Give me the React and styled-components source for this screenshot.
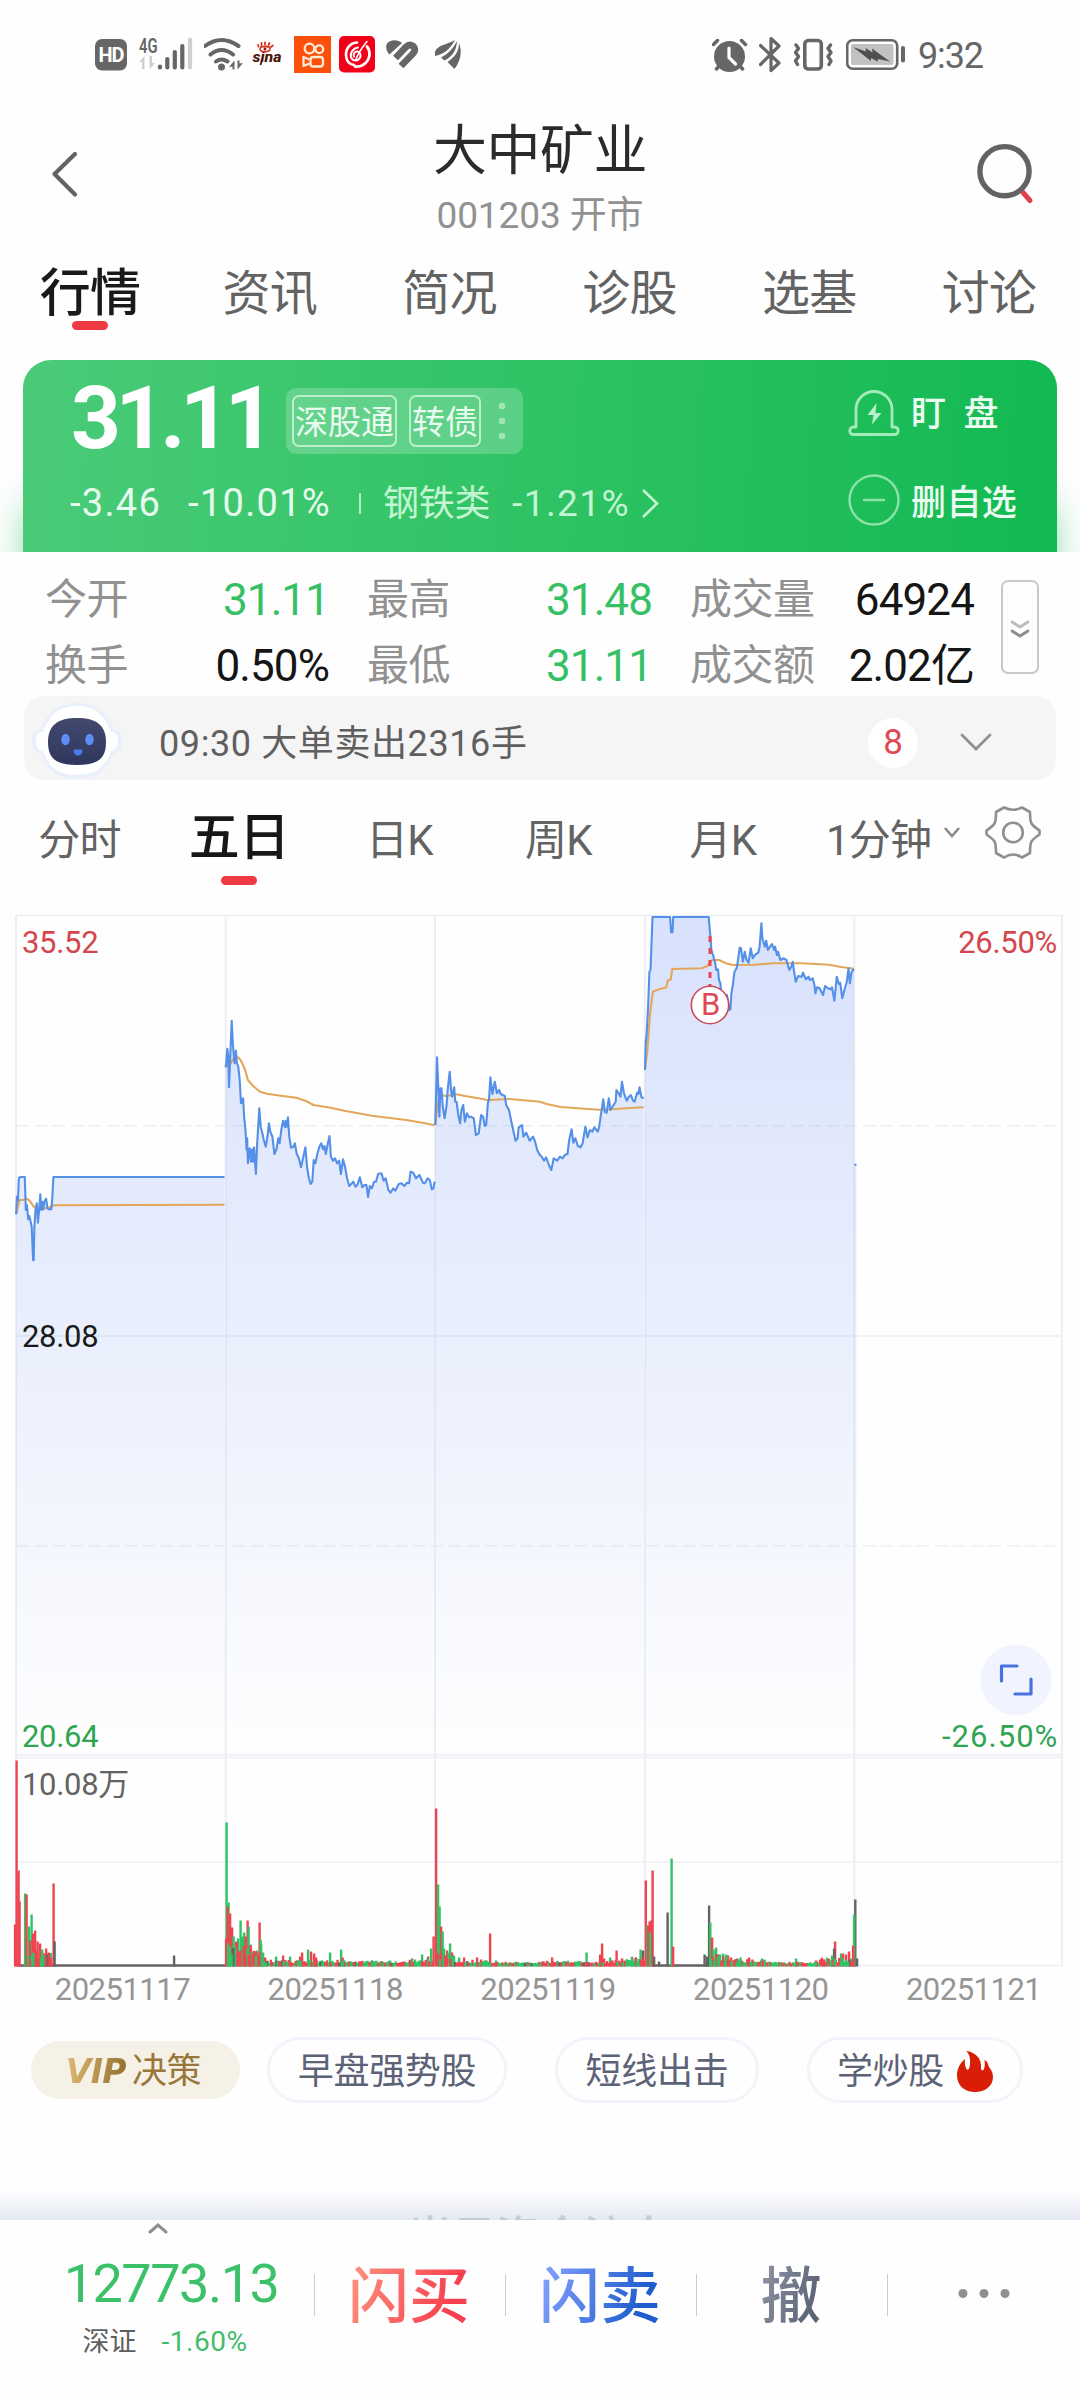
import styled, { createGlobalStyle, css } from 'styled-components';

const GlobalStyle = createGlobalStyle`
  * {
    box-sizing: border-box;
  }

  body {
    margin: 0;
    background: #fefefe;
    font-family: Roboto, 'Noto Sans CJK SC', sans-serif;
    -webkit-font-smoothing: antialiased;
  }
`;

const Screen = styled.div`
  width: 1080px;
  height: 2400px;
  display: flex;
  flex-direction: column;
  overflow: hidden;
  background: #fefefe;
`;

/* ---------- status bar ---------- */

const StatusBar = styled.div`
  height: 110px;
  flex: none;
  padding: 35px 97px 35px 95px;
  display: flex;
  justify-content: space-between;
`;

const StatusGroup = styled.div`
  display: flex;
  align-items: center;
`;

const StatusIcon = styled.svg`
  display: block;
  flex: none;
  width: ${({ $w }) => $w}px;
  height: 40px;
  margin-left: ${({ $gap }) => $gap || 0}px;
`;

const Clock = styled.span`
  margin-left: 12px;
  padding-top: 1px;
  font-size: 36px;
  line-height: 40px;
  letter-spacing: -1.1px;
  color: #666;
`;

/* ---------- header ---------- */

const Header = styled.header`
  height: 134px;
  flex: none;
  display: flex;
  justify-content: space-between;
`;

const HeaderButton = styled.button`
  width: 130px;
  height: 128px;
  padding: 0;
  border: 0;
  background: none;
`;

const TitleBlock = styled.div`
  display: flex;
  flex-direction: column;
  align-items: center;
`;

const StockName = styled.h1`
  margin: 11px 0 0;
  font-size: 54px;
  line-height: 62px;
  font-weight: 400;
  letter-spacing: -0.5px;
  color: #2b2b2b;
`;

const StockCode = styled.div`
  margin-top: 13px;
  font-size: 37px;
  line-height: 40px;
  letter-spacing: -0.1px;
  color: #919191;
`;

const MainTabs = styled.nav`
  height: 116px;
  flex: none;
  padding-right: 1px;
  display: grid;
  grid-template-columns: repeat(6, 1fr);
`;

const MainTab = styled.div`
  display: flex;
  flex-direction: column;
  align-items: center;
  padding-top: 21px;
  font-size: 48px;
  line-height: 58px;
  letter-spacing: -0.8px;
  color: #636363;

  ${({ $active }) => $active && css`
    font-size: 51px;
    font-weight: 500;
    color: #1a1a1a;
  `}
`;

const ActiveMark = styled.i`
  width: 36px;
  height: 9px;
  border-radius: 5px;
  background: #f03a43;
  margin-top: ${({ $top }) => $top}px;
`;

/* ---------- price card ---------- */

const CardStage = styled.section`
  height: 192px;
  flex: none;
  padding: 0 23px;
  overflow: hidden;
`;

const PriceCard = styled.div`
  height: 192px;
  padding: 0 0 0 48px;
  border-radius: 28px 28px 0 0;
  background: linear-gradient(93deg, #4acb78 0%, #2fc364 50%, #12b951 100%);
  box-shadow: 0 135px 36px -4px rgba(40, 190, 95, 0.6);
  display: flex;
  justify-content: space-between;
`;

const PriceMain = styled.div`
  padding-top: 24px;
`;

const PriceRow = styled.div`
  display: flex;
  align-items: center;
  height: 72px;
`;

const Price = styled.strong`
  width: 215px;
  margin-top: -5px;
  font-size: 87px;
  line-height: 72px;
  font-weight: 700;
  letter-spacing: -5.3px;
  color: #fff;
`;

const TagBox = styled.div`
  width: 237px;
  height: 66px;
  margin-top: 2px;
  padding-left: 6px;
  border-radius: 10px;
  background: rgba(255, 255, 255, 0.21);
  display: flex;
  align-items: center;
  gap: 12px;
`;

const Tag = styled.span`
  height: 52px;
  padding: 1px 1px 0;
  border: 2px solid #b9efca;
  border-radius: 7px;
  font-size: 33px;
  line-height: 50px;
  color: #e9fbef;
`;

const ChangeRow = styled.div`
  display: flex;
  align-items: center;
  height: 40px;
  margin: 27px 0 0 -1px;
  font-size: 38px;
  line-height: 40px;
  letter-spacing: 1.3px;
  color: #e6fbed;
`;

const Percent = styled.span`
  margin-left: 27px;
`;

const Sector = styled.span`
  margin: 2px 0 0 22px;
  font-size: 36px;
  letter-spacing: -0.3px;
  color: #c3f5d3;
`;

const SectorChange = styled(Sector)`
  margin-left: 22px;
  font-size: 37px;
  letter-spacing: 1.4px;
`;

const Pipe = styled.i`
  width: 2px;
  height: 21px;
  margin-left: 28px;
  background: #aeecc2;
`;

const CardActions = styled.div`
  width: 209px;
  padding-top: 25px;
`;

const CardAction = styled.div`
  display: flex;
  align-items: center;
  height: 56px;
  margin-bottom: 31px;
  gap: 11px;
  font-size: 35px;
  font-weight: 500;
  line-height: 56px;
  color: #eafcf0;
  white-space: pre;

  span {
    padding-top: 3px;
  }

  & + & span {
    padding-top: 8px;
    letter-spacing: 0.4px;
  }
`;

/* ---------- quotes ---------- */

const Quotes = styled.section`
  flex: none;
  height: 144px;
  padding: 28px 0 0 45px;
  display: grid;
  grid-template-columns: 284px 285px 284px 38px;
  grid-template-rows: 40px 40px;
  column-gap: 38px;
  row-gap: 26px;
  background: #fefefe;
`;

const Quote = styled.div`
  display: flex;
  justify-content: space-between;
  align-items: center;
  font-size: 42px;
  line-height: 40px;
  letter-spacing: -0.5px;
  color: #919191;
  grid-column: ${({ $col }) => $col};
  grid-row: ${({ $row }) => $row};
`;

const QuoteValue = styled.span`
  font-size: 44px;
  letter-spacing: -0.9px;
  color: ${({ $down }) => ($down ? '#36c065' : '#151515')};
`;

const ExpandButton = styled.button`
  grid-column: 4;
  grid-row: 1 / span 2;
  width: 38px;
  height: 94px;
  margin: 0 0 0 -11px;
  padding: 0;
  border: 2.5px solid #c9c9c9;
  border-radius: 7px;
  background: none;
`;

/* ---------- alert strip ---------- */

const AlertStrip = styled.div`
  flex: none;
  height: 84px;
  margin: 0 24px;
  padding-left: 6px;
  border-radius: 20px;
  background: #f5f5f5;
  display: flex;
  align-items: center;

  > svg:first-child {
    margin-top: 5px;
  }
`;

const AlertText = styled.span`
  flex: none;
  margin-left: 35px;
  width: 673px;
  padding-top: 11px;
  font-size: 36px;
  line-height: 40px;
  letter-spacing: 0.6px;
  color: #5f5f5f;
`;

const AlertCount = styled.span`
  width: 50px;
  height: 50px;
  margin: 10px 42px 0 36px;
  border-radius: 50%;
  background: #fff;
  text-align: center;
  font-size: 35px;
  line-height: 50px;
  color: #dd4a56;
`;

/* ---------- period tabs ---------- */

const PeriodTabs = styled.nav`
  flex: none;
  height: 130px;
  display: grid;
  grid-template-columns: 159px 160px 161px 157px 172px 156px 96px;
`;

const PeriodTab = styled.div`
  display: flex;
  flex-direction: column;
  align-items: center;
  padding-top: 31px;
  font-size: 42px;
  line-height: 60px;
  letter-spacing: -0.8px;
  color: #636363;

  ${({ $active }) => $active && css`
    padding-top: 28px;
    font-size: 51px;
    font-weight: 500;
    color: #171717;
  `}
`;

const MinuteTab = styled(PeriodTab)`
  flex-direction: row;
  align-items: flex-start;
  padding-left: 17px;
  gap: 13px;
`;

/* ---------- chart ---------- */

const ChartSvg = styled.svg`
  display: block;
  flex: none;
  width: 1080px;
  height: 1060px;
  font-size: 31px;

  text {
    letter-spacing: -0.3px;
  }
`;

const Dates = styled.div`
  flex: none;
  height: 60px;
  padding: 1px 0 0 16px;
  display: grid;
  grid-template-columns: repeat(5, 1fr);
  text-align: center;
  font-size: 31px;
  line-height: 38px;
  letter-spacing: -0.5px;
  color: #959595;
`;

/* ---------- strategy pills ---------- */

const Pills = styled.div`
  flex: none;
  height: 160px;
  padding: 7px 57px 0 31px;
  display: flex;
  align-items: flex-start;
`;

const Pill = styled.div`
  width: ${({ $w }) => $w}px;
  height: 66px;
  margin-left: ${({ $gap }) => $gap}px;
  padding-top: 3px;
  border: 3px solid #f1f4fa;
  border-radius: 33px;
  display: flex;
  justify-content: center;
  align-items: center;
  gap: 13px;
  font-size: 36px;
  letter-spacing: -0.3px;
  line-height: 40px;
  color: #5c6377;
`;

const VipPill = styled(Pill)`
  height: 58px;
  margin: 4px 0 0;
  padding-right: 4px;
  border: 0;
  background: #f6f1e6;
  color: #98783a;
  font-size: 35px;
  gap: 2px;
`;

const Vip = styled.b`
  font-family: 'DejaVu Sans', sans-serif;
  font-size: 33px;
  font-style: italic;
  font-weight: 700;
  letter-spacing: -0.6px;
  padding-right: 4px;
  background: linear-gradient(100deg, #e2bd7a, #8a6822);
  background-clip: text;
  color: transparent;
`;

/* ---------- bottom ---------- */

const NextSection = styled.div`
  flex: none;
  height: 30px;
  overflow: hidden;
  padding-top: 26px;
  background: linear-gradient(to bottom, rgba(229, 233, 242, 0), #e4e8f2);
  text-align: center;
  font-size: 44px;
  font-weight: 500;
  line-height: 44px;
  color: rgba(120, 130, 150, 0.3);
`;

const TradeBar = styled.footer`
  flex: none;
  height: 180px;
  display: grid;
  grid-template-columns: 314px 191px 191px 191px 1fr;
  background: #fefefe;
`;

const IndexBlock = styled.div`
  padding-top: 3px;
  padding-left: 28px;
  display: flex;
  flex-direction: column;
  align-items: center;

  > svg {
    margin-right: 27px;
  }
`;

const IndexValue = styled.div`
  margin-top: 22px;
  font-size: 54px;
  line-height: 56px;
  letter-spacing: -1.5px;
  color: #3cc169;
`;

const IndexMeta = styled.div`
  display: flex;
  gap: 25px;
  margin: 15px 12px 0 0;
  font-size: 27px;
  line-height: 30px;
  color: #5f5f5f;

  span {
    font-size: 28px;
    color: #43bd6c;
    letter-spacing: 0.5px;
  }
`;

const TradeCell = styled.div`
  height: 42px;
  margin-top: 54px;
  border-left: 1.5px solid #ccc;
  display: flex;
  justify-content: center;
  align-items: center;
`;

const TradeLabel = styled.span`
  margin: 4px 2px 0 0;
  font-size: 61px;
  line-height: 80px;
  font-weight: 500;
  background: linear-gradient(110deg, ${({ $from }) => $from} 10%, ${({ $to }) => $to} 80%);
  background-clip: text;
  color: transparent;
`;

/* ---------- chart data ---------- */

// samples are [tick, level] pairs; these turn them into plot pixels
const TICK = 1 / 2.904;
const LEVEL = 1 / 3;
const LEVEL_SHIFT = -130;
const FLOOR = 845;

const SESSIONS = [
  {
    price: [47,1303,49,1250,52,1262,55,1194,60,1191,72,1191,75,1290,78,1275,82,1318,85,1308,88,1320,92,1340,96,1441,98,1441,100,1340,103,1290,107,1270,110,1328,114,1285,117,1243,120,1290,123,1265,126,1288,129,1265,134,1256,138,1285,143,1288,149,1288,152,1255,155,1191,652,1191],
    average: [47,1303,52,1280,57,1259,68,1260,76,1255,86,1262,98,1280,120,1286,140,1284,156,1276,400,1275,652,1274],
  },
  {
    price: [655,862,657,850,660,806,663,830,665,922,668,850,673,722,676,790,681,850,685,812,688,850,692,860,696,900,700,970,706,955,709,1010,713,1050,716,1110,718,1075,720,1150,725,1105,729,1145,732,1108,735,1145,738,1102,743,1182,747,1090,753,985,757,1040,762,1060,766,1080,772,1100,778,1060,781,1030,785,1055,791,1070,797,1122,803,1108,808,1075,812,1090,817,1050,822,1022,828,1042,830,1022,834,1040,836,1012,840,1070,845,1103,852,1100,856,1090,862,1122,868,1135,874,1162,880,1135,887,1102,892,1165,897,1195,902,1212,907,1205,911,1140,916,1150,922,1120,927,1102,933,1090,938,1108,942,1098,946,1122,951,1095,957,1068,961,1130,967,1142,973,1135,979,1150,985,1142,990,1182,996,1138,1002,1160,1008,1195,1014,1218,1020,1212,1026,1205,1032,1220,1038,1215,1045,1192,1052,1222,1058,1215,1064,1215,1069,1251,1074,1218,1080,1225,1086,1205,1092,1205,1098,1182,1108,1180,1114,1202,1120,1195,1128,1230,1134,1238,1142,1225,1148,1232,1158,1212,1166,1210,1174,1218,1182,1208,1188,1210,1192,1175,1200,1178,1208,1195,1218,1185,1228,1208,1234,1210,1242,1195,1248,1200,1254,1228,1259,1225,1262,1205],
    average: [655,860,670,850,680,832,692,832,700,842,712,870,720,900,735,918,755,935,775,941,800,945,860,953,890,964,910,975,960,983,1000,992,1080,1007,1180,1020,1230,1029,1262,1036],
  },
  {
    price: [1264,1035,1269,832,1272,900,1276,1010,1279,925,1282,925,1286,980,1291,1015,1297,975,1300,930,1306,875,1310,930,1313,950,1319,922,1322,965,1326,965,1331,1005,1336,1030,1340,990,1345,975,1350,1025,1356,1000,1362,1012,1368,1010,1376,1015,1382,1065,1390,1060,1397,1005,1403,1010,1408,1038,1412,1035,1417,968,1420,960,1424,892,1430,942,1437,905,1443,940,1449,930,1454,942,1466,948,1470,975,1478,990,1486,1030,1492,1058,1497,1082,1503,1075,1506,1042,1516,1035,1520,1070,1528,1058,1538,1082,1548,1070,1554,1085,1560,1110,1568,1125,1573,1130,1580,1142,1586,1132,1594,1155,1601,1170,1608,1135,1618,1142,1626,1130,1634,1135,1640,1125,1648,1122,1653,1080,1660,1048,1665,1088,1671,1075,1678,1098,1686,1102,1692,1090,1700,1040,1706,1072,1713,1050,1720,1055,1726,1042,1736,1055,1740,1040,1744,1010,1748,985,1752,958,1756,995,1762,998,1768,955,1773,990,1782,975,1788,965,1790,930,1798,942,1802,950,1806,905,1812,940,1820,962,1826,950,1832,945,1838,962,1843,965,1850,938,1854,942,1857,922,1863,952,1869,955],
    average: [1264,1035,1268,1000,1272,965,1282,945,1295,948,1325,943,1350,948,1390,955,1415,960,1480,957,1568,965,1588,972,1628,981,1678,985,1738,989,1778,988,1818,985,1869,982],
  },
  {
    price: [1873,869,1875,790,1878,760,1882,680,1886,575,1889,570,1895,411,1946,411,1949,457,1953,457,1955,411,2058,411,2063,470,2066,510,2072,530,2076,545,2080,570,2085,568,2088,600,2092,610,2095,650,2103,655,2111,645,2118,690,2121,688,2124,640,2128,615,2133,575,2139,565,2142,548,2148,503,2152,505,2157,545,2163,515,2168,540,2174,548,2180,505,2186,535,2192,525,2202,518,2206,500,2211,430,2214,475,2221,500,2225,482,2230,510,2236,500,2242,492,2248,510,2251,500,2256,525,2260,515,2266,540,2276,535,2284,540,2292,570,2298,560,2302,545,2306,575,2311,605,2318,588,2328,590,2332,578,2340,598,2348,590,2352,600,2360,595,2365,615,2368,640,2373,622,2380,625,2390,645,2396,618,2404,625,2412,628,2416,622,2423,662,2430,590,2436,612,2440,608,2446,655,2452,630,2459,605,2464,565,2468,610,2473,575,2480,567],
    average: [1873,869,1880,810,1888,700,1896,635,1908,630,1935,622,1939,602,1948,598,1952,567,2038,565,2054,558,2068,540,2088,540,2108,550,2128,555,2188,554,2248,550,2328,550,2408,554,2438,560,2480,566],
  },
  { price: [2481,1154,2487,1154], average: [] },
];

const toPath = (flat) => {
  let d = '';
  for (let i = 0; i < flat.length; i += 2) {
    const x = (flat[i] * TICK).toFixed(1);
    const y = (flat[i + 1] * LEVEL + LEVEL_SHIFT).toFixed(1);
    d += `${i ? 'L' : 'M'}${x} ${y}`;
  }
  return d;
};

const toArea = (flat) =>
  `${toPath(flat)}V${FLOOR}H${(flat[0] * TICK).toFixed(1)}Z`;

const UP = '#ee4450';
const DOWN = '#2fc567';
const FLAT = '#636363';
const BAR_COLORS = { r: UP, g: DOWN, k: FLAT };

// [x, height, colour]
const SPIKES = [
  [15,42,'r'],[16.5,206,'r'],[18.5,96,'r'],[19.5,65,'r'],[25,73,'g'],[26.5,72,'r'],[29,40,'g'],[31.5,52,'g'],[30,26,'r'],[35,36,'r'],[33,33,'r'],[37.5,25,'r'],[40,23,'r'],[42,17,'g'],[46,18,'r'],[44,13,'r'],[48.5,14,'r'],[51,9,'r'],[53.5,83,'r'],[54.5,25,'k'],[174,11,'k'],
  [226.5,144,'g'],[226,28,'r'],[228.5,64,'g'],[227.5,60,'r'],[230,53,'r'],[232,39,'r'],[233.5,30,'g'],[236,25,'r'],[238,28,'g'],[240.5,46,'g'],[242,30,'g'],[244,34,'g'],[245.5,30,'r'],[247.5,46,'r'],[248.5,40,'g'],[250,22,'g'],[251,17,'r'],[253,13,'r'],[256,15,'r'],[257,16,'g'],[259.5,44,'r'],[260.5,27,'g'],[263,14,'g'],[265,9,'r'],[276,10,'g'],[283,11,'r'],[290,10,'g'],[302,14,'r'],[300,10,'r'],[308,17,'g'],[311,15,'r'],[314,13,'r'],[316,9,'r'],[330,14,'g'],[341,17,'g'],[342.5,9,'r'],[372,6,'k'],[390,6,'g'],[412,8,'r'],[415,7,'g'],[422,12,'g'],[428,10,'r'],[431,18,'g'],[433.5,30,'r'],
  [436,158,'r'],[438,82,'g'],[439.5,60,'g'],[441,40,'r'],[442.5,35,'g'],[444,18,'g'],[447,16,'r'],[450,23,'g'],[452,14,'r'],[454,10,'g'],[459,9,'g'],[464,9,'r'],[477,9,'r'],[481,7,'r'],[486,6,'r'],[490,33,'r'],[496,6,'g'],[552,9,'r'],[586.5,14,'g'],[600,12,'r'],[602,23,'r'],[604,8,'r'],[610,9,'g'],[616.5,16,'r'],[622,8,'r'],[632,9,'g'],[636,9,'k'],[640.5,17,'g'],[643,16,'k'],
  [645.7,86,'r'],[647,41,'g'],[648,41,'r'],[649.5,45,'r'],[650,34,'g'],[651,46,'r'],[652.5,96,'r'],[654,10,'k'],[659,5,'k'],[667.5,54,'k'],[671.5,108,'g'],[673,20,'r'],[704.5,12,'k'],[707,10,'k'],[709,61,'k'],[710.2,44,'g'],[712,29,'r'],[713.5,17,'g'],[716,19,'g'],[718,10,'g'],[720,12,'g'],[723,13,'g'],[726,12,'g'],[728,11,'r'],[731,9,'r'],[735,7,'r'],[737,8,'r'],[740.5,9,'g'],[749,9,'r'],[762,8,'g'],[796,8,'g'],[816,6,'r'],[824,7,'r'],[832,11,'g'],[835,25,'r'],[834,18,'k'],[841,13,'g'],[843,13,'r'],[846,12,'r'],[849,15,'r'],[851,8,'g'],[853,21,'r'],[854,52,'g'],[855.2,67,'k'],[857,8,'k'],
];

// quiet minutes between the spikes: [from, to, height]
const QUIET = [
  [28, 51, 14], [228, 262, 22], [262, 280, 5], [280, 345, 5], [345, 410, 4], [410, 434, 6],
  [438, 455, 12], [455, 490, 5], [490, 540, 3], [540, 600, 4], [600, 625, 5], [625, 645, 8],
  [711, 728, 11], [728, 765, 6], [765, 820, 3], [820, 854, 7],
];

const buildQuietBars = () => {
  const bars = [];
  let seed = 17;
  const next = () => {
    seed = (seed * 1103515245 + 12345) % 2147483648;
    return seed / 2147483648;
  };
  QUIET.forEach(([from, to, height]) => {
    for (let x = from; x < to; x += 1.74) {
      const pick = next();
      bars.push([x, 1.8 + height * (0.35 + next() * 0.65), pick < 0.46 ? 'r' : pick < 0.95 ? 'g' : 'k']);
    }
  });
  return bars;
};

const BARS = [...SPIKES, ...buildQuietBars()].sort((a, b) => b[1] - a[1]);
const VOLUME_FLOOR = 1056.5;

const PriceChart = () => (
  <ChartSvg viewBox="0 0 1080 1060">
    <defs>
      <linearGradient id="area" gradientUnits="userSpaceOnUse" x1="0" y1="5" x2="0" y2="845">
        <stop offset="0" stopColor="#4f7df5" stopOpacity="0.22" />
        <stop offset="0.5" stopColor="#5a82f5" stopOpacity="0.12" />
        <stop offset="1" stopColor="#5a82f5" stopOpacity="0" />
      </linearGradient>
    </defs>

    <g stroke="#ebeef4" strokeWidth="2" fill="none">
      <path d="M15 5.5H1063M15 426H1063M15 845H1063M15 847.5H1063M15 952H1063M15 1055.5H1063" strokeWidth="1.6" />
      <path d="M16 5V1056M225.7 5V1056M435 5V1056M644.8 5V1056M854.3 5V1056M1062 5V1056" />
      <path d="M17 215.7H1063M17 636H1063" strokeDasharray="12 6" strokeWidth="1.6" />
    </g>

    {SESSIONS.map(({ price, average }) => (
      <g key={price[0]} fill="none" strokeWidth="2.1" strokeLinejoin="round">
        <path d={toArea(price)} fill="url(#area)" />
        {average.length > 0 && <path d={toPath(average)} stroke="#e3a65a" />}
        <path d={toPath(price)} stroke="#5490e8" />
      </g>
    ))}

    <path d="M710 26V76" stroke="#ee4453" strokeWidth="3" strokeDasharray="6 6" />
    <circle cx="710" cy="95" r="18.7" fill="#fff" stroke="#cb4a60" strokeWidth="1.6" />
    <text x="710.5" y="105" textAnchor="middle" fontSize="31" fill="#dd4a56">B</text>

    <text x="22" y="42.5" fill="#d4464e">35.52</text>
    <text x="1057" y="42.5" textAnchor="end" fill="#d4464e">26.50%</text>
    <text x="22" y="436.5" fill="#1a1a1a">28.08</text>
    <text x="22" y="836.5" fill="#2fa552">20.64</text>
    <text x="942" y="836.500" textLength="115" fill="#2fa552">-26.50%</text>
    <text x="22" y="884.5" fill="#636363">10.08万</text>

    <circle cx="1016" cy="770" r="35.5" fill="#f1f4fe" />
    <path d="M1001.5 771V756H1017M1015 784H1031V769" stroke="#4a70dd" strokeWidth="3.2" fill="none" strokeLinecap="round" strokeLinejoin="round" />

    <path d="M17 1055.5H226M652 1055.5H709" stroke={FLAT} strokeWidth="2.4" />
    {BARS.map(([x, h, c]) => (
      <rect key={`${x}-${h}`} x={x - 1.1} y={VOLUME_FLOOR - h} width="2.4" height={h} fill={BAR_COLORS[c]} />
    ))}
  </ChartSvg>
);

/* ---------- icons ---------- */

const LeftStatus = () => (
  <StatusGroup>
    <StatusIcon $w={32} viewBox="95 35 32 40">
      <rect x="95" y="39" width="32" height="31.5" rx="7" fill="#666" />
      <text x="111" y="62" textAnchor="middle" fontSize="20" fontWeight="700" letterSpacing="-1" fill="#fff">HD</text>
    </StatusIcon>
    <StatusIcon $w={54} $gap={12} viewBox="139 35 54 40">
      <text x="139" y="52.5" fontSize="21" fontWeight="600" textLength="18.500" lengthAdjust="spacingAndGlyphs" fill="#666">4G</text>
      <path d="M139 62l5.5-6v13h-2.500v-7zM155 63l-5.500 6V56h2.500v7z" fill="#cfcfcf" />
      <g stroke="#666" strokeWidth="4.200" strokeLinecap="round">
        <path d="M160 66.500v1M167.300 59v8.500M174.800 52v15.500M182.300 46v21.500" />
        <path d="M190 39.500v28" stroke="#d0d0d0" />
      </g>
    </StatusIcon>
    <StatusIcon $w={39} $gap={11} viewBox="204 35 39 40">
      <g fill="none" stroke="#666" strokeWidth="4" strokeLinecap="round">
        <path d="M205 46q16.500-12 33.500 0M210.500 54.500q11-9 22.500 0M216 61.500q5.500-4 11.500 0" />
      </g>
      <circle cx="221.500" cy="67" r="3.500" fill="#666" />
      <path d="M229 67l5.500-6.500v9h-2v-3zM243 63l-5.500 6.500v-9h2v3z" fill="#666" />
    </StatusIcon>
    <StatusIcon $w={32} $gap={9} viewBox="252 35 32 40">
      <text x="252.500" y="61.500" fontSize="15" fontWeight="800" fontStyle="italic" textLength="29" lengthAdjust="spacingAndGlyphs" fill="#4a1208">sina</text>
      <ellipse cx="265" cy="49" rx="5" ry="2.600" fill="#fefefe" stroke="#d8321c" strokeWidth="1.600" />
      <circle cx="265" cy="49" r="1.400" fill="#7a1a10" />
      <path d="M258.500 46.500l-.5-1.500M261.500 45v-2M265 44.500V42.500M268.500 45l1-2M271 47l1.800-1.500" stroke="#d8321c" strokeWidth="1.800" strokeLinecap="round" />
      <path d="M262 60l-1.500 5" stroke="#4a1208" strokeWidth="1.800" />
    </StatusIcon>
    <StatusIcon $w={37} $gap={10} viewBox="294 35 37 40">
      <rect x="294" y="36" width="37" height="37" fill="#fb4f0c" />
      <g fill="none" stroke="#fdebd3" strokeWidth="2.300" strokeLinejoin="round">
        <circle cx="309.500" cy="48.500" r="4.800" />
        <circle cx="319.300" cy="49.300" r="3.900" />
        <rect x="310.500" y="57" width="12.500" height="9.500" rx="2.800" />
        <path d="M309.500 59.500l-6-2.500v9l6-2.500" />
      </g>
    </StatusIcon>
    <StatusIcon $w={36} $gap={8} viewBox="339 35 36 40">
      <rect x="339" y="36" width="36" height="36.500" rx="5" fill="#f20018" />
      <g fill="none" stroke="#fff" strokeLinecap="round">
        <path d="M357 42.500c-7 .5-11.500 6-11 13 .5 6 4 9 8 9.500" strokeWidth="2.600" />
        <path d="M355 66.500c8 1 14-5 14.500-12 0-3-.8-6-2.500-8" strokeWidth="2.800" />
        <path d="M358 47.500c-5 1-8 5-7 9.500 1 4 6 4.500 8.500 1.500 2-2.500 1-6.500-2-7-3-.3-4.500 2.500-3.500 5" strokeWidth="2" />
        <path d="M367 41.500c-4 5-9 11-11 18" strokeWidth="1.600" />
      </g>
    </StatusIcon>
    <StatusIcon $w={34} $gap={11} viewBox="386 35 34 40">
      <path d="M389.500 54.500C385 50 385 43.500 389.500 41.500c4-2 9-1.500 12.500 1.500z" fill="#666" />
      <path d="M395.500 58L406 47q3.500-3.500 7-1 3.500 3.500 0 7.500L401 66" stroke="#666" strokeWidth="6.800" fill="none" />
    </StatusIcon>
    <StatusIcon $w={26} $gap={15} viewBox="435 35 26 40">
      <path d="M455 40c-9 5-18 5-20 12v4c8-2 14-5 20-16z" fill="#666" />
      <path d="M457 41c-4 8-9 13-16 16.500l3.500 3c8-4 12-10 12.500-19.500z" fill="#666" />
      <path d="M459 43c0 8-4 14-11.500 19l7 7c6-8 8-17 4.500-26z" fill="#666" />
    </StatusIcon>
  </StatusGroup>
);

const RightStatus = () => (
  <StatusGroup>
    <StatusIcon $w={36} viewBox="712 35 36 40">
      <circle cx="729.500" cy="56.500" r="15.500" fill="#666" />
      <path d="M713.500 44.500l4-4M745.500 44.500l-4-4M716.500 69l3-3.500M742.500 69l-3-3.500" stroke="#666" strokeWidth="3.500" strokeLinecap="round" />
      <path d="M729 48v9.500l6.500 6.500" stroke="#fff" strokeWidth="3.200" fill="none" strokeLinecap="round" />
    </StatusIcon>
    <StatusIcon $w={22} $gap={11} viewBox="759 35 22 40">
      <path d="M760.500 45.500L779 63l-8 7.500v-32l8 7.500-18.500 18.500" stroke="#666" strokeWidth="3.200" fill="none" strokeLinecap="round" strokeLinejoin="round" />
    </StatusIcon>
    <StatusIcon $w={40} $gap={12} viewBox="793 35 40 40">
      <rect x="804.800" y="40.500" width="16.500" height="28.500" rx="3.500" fill="none" stroke="#666" strokeWidth="3.600" />
      <path d="M796 45l2.500 3.500-3 4 3 4-3 4.500 2 3.500M830.500 45l-2.500 3.500 3 4-3 4 3 4.500-2 3.500" stroke="#666" strokeWidth="3.400" fill="none" strokeLinecap="round" strokeLinejoin="round" />
    </StatusIcon>
    <StatusIcon $w={60} $gap={13} viewBox="846 35 60 40">
      <rect x="847.200" y="40.200" width="50" height="28.600" rx="5.500" fill="none" stroke="#666" strokeWidth="2.600" />
      <rect x="851" y="44" width="42.500" height="21" rx="2" fill="#c2c2c2" />
      <path d="M853 47l13 4.500-.5-3.500 7 4.500-.5-4 18 13-12-2.500-.5 2.500-6.500-3.500v3z" fill="#4f4f4f" />
      <path d="M903 48v12.500" stroke="#666" strokeWidth="4" strokeLinecap="round" />
    </StatusIcon>
    <Clock>9:32</Clock>
  </StatusGroup>
);

const BackIcon = () => (
  <svg width="130" height="128" fill="none">
    <path d="M75 44L54.500 64 75 84.500" stroke="#636363" strokeWidth="4.200" strokeLinecap="round" strokeLinejoin="round" />
  </svg>
);

const SearchIcon = () => (
  <svg width="130" height="128" fill="none">
    <path d="M73 82.500l7 8" stroke="#e63e48" strokeWidth="5" strokeLinecap="round" />
    <circle cx="54.500" cy="61.200" r="24.600" stroke="#636363" strokeWidth="5.400" />
  </svg>
);

const WatchIcon = () => (
  <svg width="52" height="52" viewBox="0 0 52 52" fill="none" stroke="#a4ebbb" strokeWidth="2.800">
    <path d="M8 40V22.500a18 18 0 0 1 36 0V40h2.500a3 3 0 0 1 0 7.500h-41a3 3 0 0 1 0-7.500z" strokeLinejoin="round" />
    <path d="M28.500 16L19.500 28h6l-1.500 9.500L33.500 26h-6z" fill="#b8f2ca" stroke="none" />
  </svg>
);

const RemoveIcon = () => (
  <svg width="52" height="52" viewBox="0 0 52 52" fill="none" stroke="#8ae3a7" strokeWidth="2.400">
    <circle cx="26" cy="26" r="24.500" />
    <path d="M16 26H36" strokeLinecap="round" />
  </svg>
);

const RobotIcon = () => (
  <svg width="94" height="80" viewBox="0 0 94 80">
    <defs>
      <linearGradient id="face" x1="0" y1="0" x2="0" y2="1">
        <stop offset="0" stopColor="#43486f" />
        <stop offset="1" stopColor="#2f365c" />
      </linearGradient>
    </defs>
    <path d="M47 2C66 2 77 11 83 28c6 1 9 5 9 12s-3 12-9 13C77 70 66 78 47 78S17 70 11 53c-6-1-9-6-9-13s3-11 9-12C17 11 28 2 47 2z" fill="#e9f0fc" />
    <path d="M47 5C65 5 75 14 81 31c5 0 7 3 7 9s-2 9-7 10C75 67 65 74 47 74S19 67 13 50c-5-1-7-4-7-10s2-9 7-9C19 14 29 5 47 5z" fill="#fff" />
    <path d="M47 17c19 0 29 7 29 24 0 16-7 23-29 23s-29-7-29-23c0-17 10-24 29-24z" fill="url(#face)" />
    <ellipse cx="35.500" cy="38.500" rx="4.200" ry="5.800" fill="#5d8df5" />
    <ellipse cx="59.500" cy="38.500" rx="4.200" ry="5.800" fill="#5d8df5" />
    <path d="M43.500 48.500h9q0 6-4.500 6t-4.500-6z" fill="#4a7cf0" />
  </svg>
);

const GearIcon = () => (
  <svg width="96" height="106" viewBox="965 780 96 106" fill="none" stroke="#8f8f8f" strokeWidth="2.600" strokeLinejoin="round">
    <path d="M1004 807.500q9 4.500 18 0l8 4.500q0 9 1.500 11.500t8 7v4q-6.500 4.500-8 7t-1.500 11.500l-8 4.500q-9-6-18 0l-8-4.500q0-9-1.500-11.500t-8-7v-4q6.500-4.500 8-7t1.500-11.500z" />
    <circle cx="1013" cy="832.500" r="9.800" />
  </svg>
);

const FlameIcon = () => (
  <svg width="36" height="41" viewBox="0 0 36 41">
    <path d="M9 0c9 1 16 7 15 17 0 3 2 3 3 1 1-3 1-6 .5-9 2 1 3 2 3.500 4 .5 4 5 6 5 13 0 9-8 15-18 15S0 35 0 24c0-7 4-13 8-16-.5 4 0 7 1 9 1 3 3 2 3.500-1C14 10 13 3 9 0z" fill="#d81e06" />
  </svg>
);

const PERIODS = ['分时', '五日', '日K', '周K', '月K'];
const TABS = ['行情', '资讯', '简况', '诊股', '选基', '讨论'];
const DATES = ['20251117', '20251118', '20251119', '20251120', '20251121'];

const QUOTES = [
  { label: '今开', value: '31.11', col: 1, row: 1, down: true },
  { label: '最高', value: '31.48', col: 2, row: 1, down: true },
  { label: '成交量', value: '64924', col: 3, row: 1 },
  { label: '换手', value: '0.50%', col: 1, row: 2 },
  { label: '最低', value: '31.11', col: 2, row: 2, down: true },
  { label: '成交额', value: '2.02亿', col: 3, row: 2 },
];

const App = () => (
  <>
    <GlobalStyle />
    <Screen>
      <StatusBar>
        <LeftStatus />
        <RightStatus />
      </StatusBar>

      <Header>
        <HeaderButton aria-label="返回"><BackIcon /></HeaderButton>
        <TitleBlock>
          <StockName>大中矿业</StockName>
          <StockCode>001203 开市</StockCode>
        </TitleBlock>
        <HeaderButton aria-label="搜索"><SearchIcon /></HeaderButton>
      </Header>

      <MainTabs>
        {TABS.map((tab, index) => (
          <MainTab key={tab} $active={index === 0}>
            {tab}
            {index === 0 && <ActiveMark $top={-2} />}
          </MainTab>
        ))}
      </MainTabs>

      <CardStage>
        <PriceCard>
          <PriceMain>
            <PriceRow>
              <Price>31.11</Price>
              <TagBox>
                <Tag>深股通</Tag>
                <Tag>转债</Tag>
                <svg width="18" height="40" fill="#a3e5b9">
                  <circle cx="9" cy="5" r="3.200" />
                  <circle cx="9" cy="20" r="3.200" />
                  <circle cx="9" cy="35" r="3.200" />
                </svg>
              </TagBox>
            </PriceRow>
            <ChangeRow>
              <span>-3.46</span>
              <Percent>-10.01%</Percent>
              <Pipe />
              <Sector>钢铁类</Sector>
              <SectorChange>-1.21%</SectorChange>
              <svg width="34" height="34" fill="none">
                <path d="M13 4l14 13.500L13 31" stroke="#c3f5d3" strokeWidth="2.600" />
              </svg>
            </ChangeRow>
          </PriceMain>
          <CardActions>
            <CardAction><WatchIcon /><span>盯  盘</span></CardAction>
            <CardAction><RemoveIcon /><span>删自选</span></CardAction>
          </CardActions>
        </PriceCard>
      </CardStage>

      <Quotes>
        {QUOTES.map(({ label, value, col, row, down }) => (
          <Quote key={label} $col={col} $row={row}>
            {label}
            <QuoteValue $down={down}>{value}</QuoteValue>
          </Quote>
        ))}
        <ExpandButton aria-label="展开">
          <svg width="32" height="30" fill="none" strokeWidth="2.800" strokeLinecap="round">
            <path d="M8 11l8 5 8-5" stroke="#bdbdbd" />
            <path d="M8 20l8 5 8-5" stroke="#8c8c8c" />
          </svg>
        </ExpandButton>
      </Quotes>

      <AlertStrip>
        <RobotIcon />
        <AlertText>09:30 大单卖出2316手</AlertText>
        <AlertCount>8</AlertCount>
        <svg width="32" height="30" fill="none">
          <path d="M2 12l14 14 14-14" stroke="#8f8f8f" strokeWidth="2.800" strokeLinecap="round" />
        </svg>
      </AlertStrip>

      <PeriodTabs>
        {PERIODS.map((period, index) => (
          <PeriodTab key={period} $active={index === 1}>
            {period}
            {index === 1 && <ActiveMark $top={8} />}
          </PeriodTab>
        ))}
        <MinuteTab>
          1分钟
          <svg width="16" height="40" fill="none">
            <path d="M1 17l7 8 7-8" stroke="#8a8a8a" strokeWidth="2.500" />
          </svg>
        </MinuteTab>
        <GearIcon />
      </PeriodTabs>

      <PriceChart />

      <Dates>
        {DATES.map((date) => <span key={date}>{date}</span>)}
      </Dates>

      <Pills>
        <VipPill $w={209}><Vip>VIP</Vip>决策</VipPill>
        <Pill $w={240} $gap={27}>早盘强势股</Pill>
        <Pill $w={204} $gap={48}>短线出击</Pill>
        <Pill $w={216} $gap={48}>学炒股<FlameIcon /></Pill>
      </Pills>

      <NextSection>当日资金流向</NextSection>

      <TradeBar>
        <IndexBlock>
          <svg width="20" height="11" fill="none">
            <path d="M2 9l8-7 8 7" stroke="#8f8f8f" strokeWidth="3" strokeLinecap="round" />
          </svg>
          <IndexValue>12773.13</IndexValue>
          <IndexMeta>深证<span>-1.60%</span></IndexMeta>
        </IndexBlock>
        <TradeCell><TradeLabel $from="#fd8c7c" $to="#f7404f">闪买</TradeLabel></TradeCell>
        <TradeCell><TradeLabel $from="#7f9dfb" $to="#1e5dcd">闪卖</TradeLabel></TradeCell>
        <TradeCell><TradeLabel $from="#8b91a1" $to="#5b6376">撤</TradeLabel></TradeCell>
        <TradeCell>
          <svg width="54" height="12" fill="#8f8f8f">
            <circle cx="6" cy="4.500" r="4.500" />
            <circle cx="27" cy="4.500" r="4.500" />
            <circle cx="48" cy="4.500" r="4.500" />
          </svg>
        </TradeCell>
      </TradeBar>
    </Screen>
  </>
);

export default App;
